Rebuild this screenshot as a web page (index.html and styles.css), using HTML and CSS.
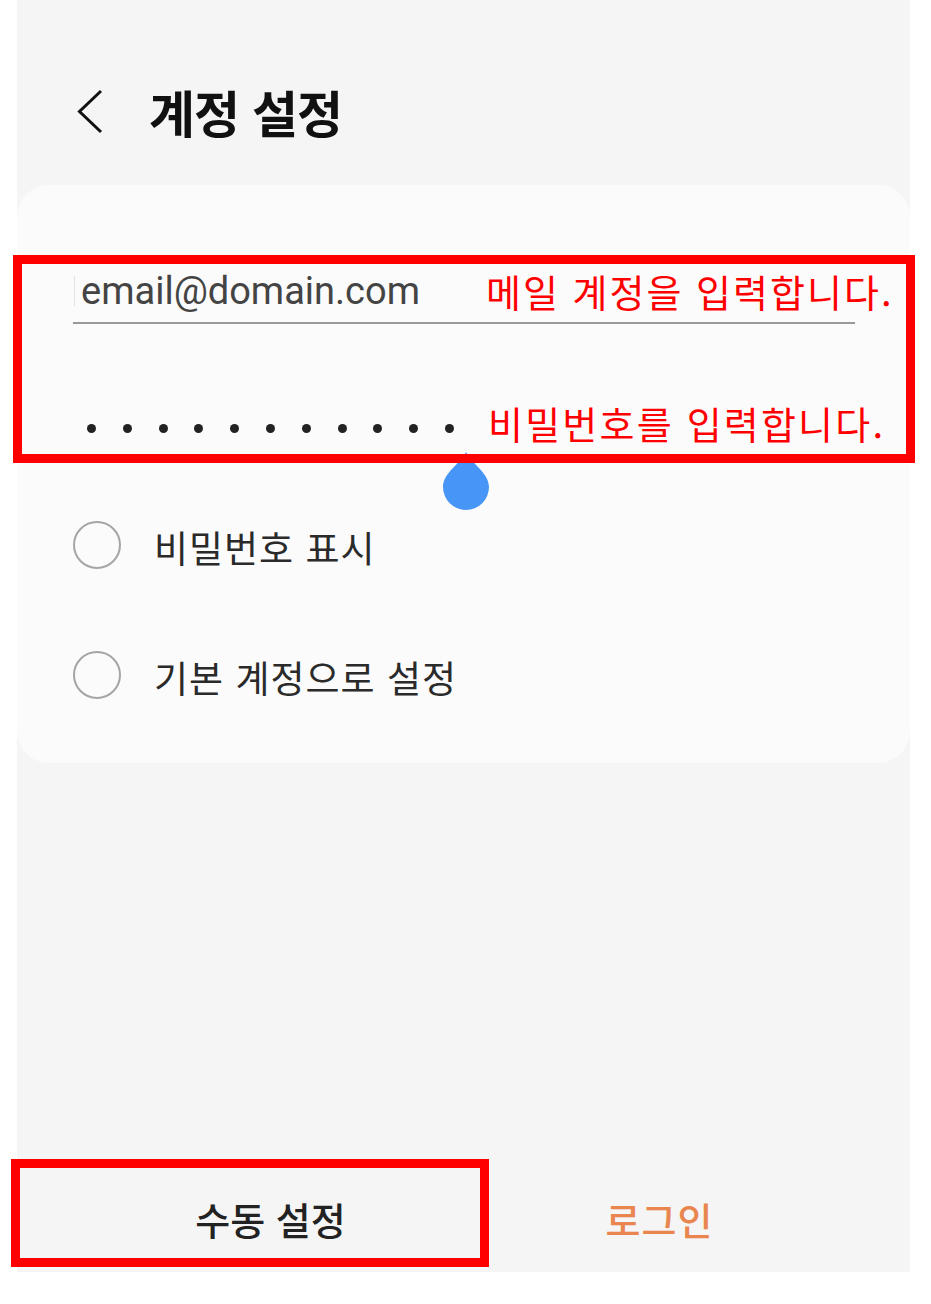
FILE: index.html
```html
<!DOCTYPE html>
<html lang="ko">
<head>
  <meta charset="UTF-8" />
  <meta name="viewport" content="width=device-width, initial-scale=1.0" />
  <title>계정 설정</title>
  <link rel="stylesheet" href="styles.css">
</head>
<body>
  <div class="screen">
    <header class="top-bar">
      <a class="back" href="#" aria-label="뒤로">
        <svg width="28" height="46" viewBox="0 0 28 46">
          <polyline points="25,3 3.5,23.5 25,44" fill="none" stroke="#111" stroke-width="3" />
        </svg>
      </a>
      <h1 class="title">계정 설정</h1>
    </header>

    <section class="card">
      <!-- Red box marks the two input fields -->
      <div class="note-box">
        <div class="field email-field">
          <span class="caret"></span>
          <span class="email-text">email@domain.com</span>
          <span class="note note-email">메일 계정을 입력합니다.</span>
        </div>
        <div class="field password-field">
          <span class="dot"></span><span class="dot"></span><span class="dot"></span>
          <span class="dot"></span><span class="dot"></span><span class="dot"></span>
          <span class="dot"></span><span class="dot"></span><span class="dot"></span>
          <span class="dot"></span><span class="dot"></span>
          <span class="note note-password">비밀번호를 입력합니다.</span>
        </div>
      </div>

      <!-- Text cursor handle -->
      <svg class="handle" width="46" height="58" viewBox="0 0 46 58">
        <path d="M23 0 C29 12 46 21 46 35 A23 23 0 0 1 0 35 C0 21 17 12 23 0 Z" fill="#4796f7" />
      </svg>

      <label class="option">
        <span class="radio"></span>
        <span class="option-label">비밀번호 표시</span>
      </label>
      <label class="option">
        <span class="radio"></span>
        <span class="option-label">기본 계정으로 설정</span>
      </label>
    </section>

    <footer class="bottom-bar">
      <div class="note-box-button"></div>
      <button type="button" class="bar-btn">수동 설정</button>
      <button type="button" class="bar-btn login">로그인</button>
    </footer>
  </div>
</body>
</html>
```

FILE: styles.css
```css
/* Base styles */
body {
  margin: 0;
  padding: 0;
  background-color: #fff;
  font-family: "Noto Sans CJK KR", "Noto Sans", sans-serif;
}
/* Phone screen */
.screen {
  width: 893px;
  height: 1272px;
  margin-left: 17px;
  background-color: #f5f5f5;
  display: flex;
  flex-direction: column;
}
/* Header */
.top-bar {
  display: flex;
  align-items: center;
  height: 48px;
  margin-top: 87px;
  padding-left: 59px;
}
.back {
  display: flex;
  width: 28px;
  height: 46px;
}
.title {
  margin: 0 0 0 45px;
  font-size: 50px;
  line-height: 48px;
  font-weight: bold;
  letter-spacing: -1px;
  color: #111;
}
/* Card with the form */
.card {
  position: relative;
  margin-top: 50px;
  padding-bottom: 23px;
  background-color: #fbfbfb;
  border-radius: 32px;
}
.note-box {
  position: relative;
  z-index: 1;
  margin: 70px -5px 17px -4px;
  padding: 7px 51px 6px;
  border: 9px solid #f00;
}
.field {
  position: relative;
  display: flex;
  align-items: center;
}
.email-field {
  height: 40px;
  padding: 0 0 11px 1px;
  border-bottom: 2px solid #999;
}
.caret {
  width: 1px;
  height: 30px;
  margin-right: 6px;
  background-color: #e2e2e2;
}
.email-text {
  font-family: Roboto, "Noto Sans", sans-serif;
  font-size: 38px;
  line-height: 40px;
  color: #444;
}
.password-field {
  height: 40px;
  margin-top: 84px;
  padding-left: 14px;
  gap: 26.8px;
}
.dot {
  width: 9px;
  height: 9px;
  border-radius: 50%;
  background-color: #222;
}
/* Red annotation labels */
.note {
  position: absolute;
  font-size: 38px;
  line-height: 38px;
  color: #f00;
  white-space: nowrap;
}
.note-email {
  left: 413px;
  top: 1px;
  letter-spacing: 2px;
}
.note-password {
  left: 415px;
  top: -4px;
  letter-spacing: 2.2px;
}
.handle {
  position: absolute;
  left: 426px;
  top: 267px;
}
/* Checkbox-like options */
.option {
  display: flex;
  align-items: center;
  height: 130px;
  padding-left: 56px;
}
.radio {
  width: 48px;
  height: 48px;
  box-sizing: border-box;
  border: 2.5px solid #a5a5a5;
  border-radius: 50%;
}
.option-label {
  margin: 4px 0 0 33px;
  font-size: 37px;
  line-height: 37px;
  letter-spacing: 1px;
  color: #2a2a2a;
}
/* Bottom buttons */
.bottom-bar {
  position: relative;
  display: flex;
  height: 113px;
  margin-top: auto;
  padding: 5px 56px 0 59px;
  box-sizing: border-box;
}
.bar-btn {
  flex: 1;
  height: 108px;
  padding: 0;
  border: none;
  background: none;
  font-family: "Noto Sans CJK KR", "Noto Sans", sans-serif;
  font-size: 38px;
  font-weight: 500;
  letter-spacing: 0;
  color: #222;
}
.bar-btn.login {
  letter-spacing: 1px;
  color: #e98650;
}
.note-box-button {
  position: absolute;
  left: -6px;
  top: 0;
  width: 478px;
  height: 108px;
  box-sizing: border-box;
  border: 9px solid #f00;
  pointer-events: none;
}
```
